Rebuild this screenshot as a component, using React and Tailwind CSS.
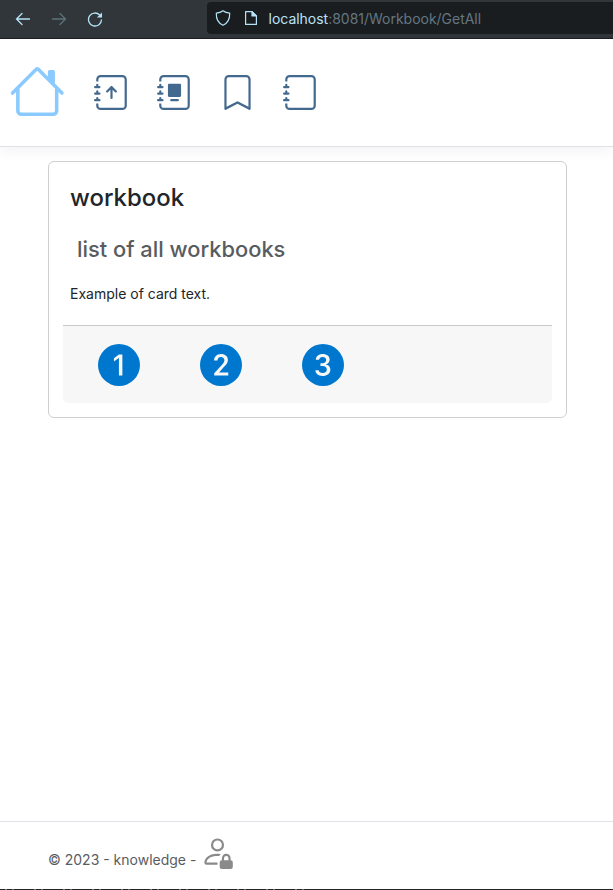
import React from "react";
import {
  BsHouse,
  BsJournal,
  BsJournalAlbum,
  BsJournalArrowUp,
  BsBookmark,
  BsPersonLock,
  Bs1CircleFill,
  Bs2CircleFill,
  Bs3CircleFill,
} from "react-icons/bs";

function BrowserBar() {
  return (
    <div className="flex h-[39px] shrink-0 items-start border-b border-[#1b1d22] bg-[#31363a]">
      <div className="flex h-[37px] w-[207px] items-center gap-5 pl-[15px]">
        <svg className="h-4 w-4" viewBox="0 0 16 16" fill="none" stroke="#b5e3f7" strokeWidth="1.3" strokeLinecap="round">
          <path d="M14.500 8H1.500M7 2.500L1.500 8L7 13.500" />
        </svg>
        <svg className="h-4 w-4" viewBox="0 0 16 16" fill="none" stroke="#5d717b" strokeWidth="1.3" strokeLinecap="round">
          <path d="M1.500 8H14.500M9 2.500l5.500 5.500L9 13.500" />
        </svg>
        <svg className="h-4 w-4" viewBox="0 0 16 16" fill="none" stroke="#b5e3f7" strokeWidth="1.3">
          <path d="M12.700 4A6.500 6.500 0 1 0 14.500 8.500" />
          <path d="M15 1.400V6.500H9.900z" fill="#b5e3f7" stroke="none" />
        </svg>
      </div>
      <div className="mt-[2px] flex h-8 flex-1 items-center rounded-l-[4px] bg-[#191d20] pl-2">
        <svg className="h-4 w-4" viewBox="0 0 16 16" fill="none" stroke="#b5e3f7" strokeWidth="1.2" strokeLinejoin="round">
          <path d="M8 .8C6 2.400 4 3 1.300 3.200C1.100 9 3 13 8 15.300C13 13 14.900 9 14.700 3.200C12 3 10 2.400 8 .8z" />
        </svg>
        <svg className="ml-3 h-4 w-4" viewBox="0 0 16 16" fill="none" stroke="#b5e3f7" strokeWidth="1.2" strokeLinejoin="round">
          <path d="M2.600 1.600H9L13.400 6V14.400H2.600z" />
          <path d="M9 1.600V6H13.400z" fill="#b5e3f7" />
        </svg>
        <span className="ml-[9.500px] pt-[2px] text-[13.980px] leading-5 whitespace-nowrap text-[#657681]">
          <span className="text-[#b9e2f5]">localhost</span>:8081/Workbook/GetAll
        </span>
      </div>
    </div>
  );
}

function Navigation() {
  return (
    <header className="flex h-[108px] shrink-0 items-center border-b border-[#dee2e6] bg-white pl-[9px] shadow-[0_4px_12px_rgba(0,0,0,0.05)]">
      <BsHouse className="mt-[-3px] h-[56.500px] w-[56.500px] text-[#8bcaff]" />
      <nav className="ml-[28.250px] flex gap-7 text-[#44698f]">
        <BsJournalArrowUp className="h-[35px] w-[35px]" />
        <BsJournalAlbum className="h-[35px] w-[35px]" />
        <BsBookmark className="h-[35px] w-[35px]" />
        <BsJournal className="h-[35px] w-[35px]" />
      </nav>
    </header>
  );
}

function WorkbookCard() {
  return (
    <section className="mt-[14px] mr-[46px] ml-12 h-[257px] rounded-[6px] border border-[#cfcfcf] bg-white px-[14px] pt-[21px]">
      <h1 className="pl-[7px] text-[23.950px] leading-[30px] font-medium whitespace-nowrap text-[#212529]">workbook</h1>
      <h2 className="mt-[22px] pl-[14px] text-[21.850px] leading-7 font-medium whitespace-nowrap text-[#595c5f]">
        list of all workbooks
      </h2>
      <p className="mt-5 pl-[7px] text-[14px] leading-[21px] whitespace-nowrap text-[#212529]">Example of card text.</p>
      <div className="mt-[21px] flex h-[78px] gap-[60px] rounded-b-[5px] border-t border-[#c8c9ca] bg-[#f7f7f7] pt-[18px] pl-[35px] text-[#0077cf]">
        <Bs1CircleFill className="h-[42px] w-[42px]" />
        <Bs2CircleFill className="h-[42px] w-[42px]" />
        <Bs3CircleFill className="h-[42px] w-[42px]" />
      </div>
    </section>
  );
}

export default function App() {
  return (
    <div className="flex h-[890px] w-[613px] flex-col overflow-hidden bg-white font-['Inter',sans-serif]">
      <BrowserBar />
      <Navigation />
      <main className="flex-1">
        <WorkbookCard />
      </main>
      <footer className="flex h-[68px] shrink-0 items-start border-t border-[#dee2e6] pl-12 text-[14px] text-[#595c5f]">
        <span className="mt-[27px] leading-[21px] whitespace-nowrap">© 2023 - knowledge -</span>
        <BsPersonLock className="mt-3 ml-1 h-[35px] w-[35px] text-[#8a8a8a]" />
      </footer>
      <div className="flex h-px shrink-0 bg-[#242225]">
        <div className="w-[305px] bg-[repeating-linear-gradient(90deg,#242225_0_5px,#777_5px_7px,#242225_7px_12px,#666_12px_14px,#242225_14px_29px)]" />
      </div>
    </div>
  );
}
